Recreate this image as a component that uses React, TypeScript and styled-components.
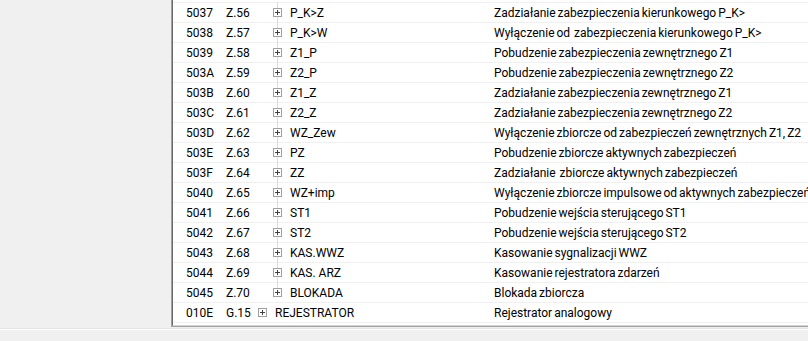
import React from 'react';
import styled, { createGlobalStyle } from 'styled-components';

type Row = {
  code: string;
  ref: string;
  name: string;
  desc: string;
  level: number;
  last?: boolean;
};

const rows: Row[] = [
  { code: '5037', ref: 'Z.56', name: 'P_K>Z', desc: 'Zadziałanie zabezpieczenia kierunkowego P_K>', level: 2 },
  { code: '5038', ref: 'Z.57', name: 'P_K>W', desc: 'Wyłączenie od  zabezpieczenia kierunkowego P_K>', level: 2 },
  { code: '5039', ref: 'Z.58', name: 'Z1_P', desc: 'Pobudzenie zabezpieczenia zewnętrznego Z1', level: 2 },
  { code: '503A', ref: 'Z.59', name: 'Z2_P', desc: 'Pobudzenie zabezpieczenia zewnętrznego Z2', level: 2 },
  { code: '503B', ref: 'Z.60', name: 'Z1_Z', desc: 'Zadziałanie zabezpieczenia zewnętrznego Z1', level: 2 },
  { code: '503C', ref: 'Z.61', name: 'Z2_Z', desc: 'Zadziałanie zabezpieczenia zewnętrznego Z2', level: 2 },
  { code: '503D', ref: 'Z.62', name: 'WZ_Zew', desc: 'Wyłączenie zbiorcze od zabezpieczeń zewnętrznych Z1, Z2', level: 2 },
  { code: '503E', ref: 'Z.63', name: 'PZ', desc: 'Pobudzenie zbiorcze aktywnych zabezpieczeń', level: 2 },
  { code: '503F', ref: 'Z.64', name: 'ZZ', desc: 'Zadziałanie  zbiorcze aktywnych zabezpieczeń', level: 2 },
  { code: '5040', ref: 'Z.65', name: 'WZ+imp', desc: 'Wyłączenie zbiorcze impulsowe od aktywnych zabezpieczeń', level: 2 },
  { code: '5041', ref: 'Z.66', name: 'ST1', desc: 'Pobudzenie wejścia sterującego ST1', level: 2 },
  { code: '5042', ref: 'Z.67', name: 'ST2', desc: 'Pobudzenie wejścia sterującego ST2', level: 2 },
  { code: '5043', ref: 'Z.68', name: 'KAS.WWZ', desc: 'Kasowanie sygnalizacji WWZ', level: 2 },
  { code: '5044', ref: 'Z.69', name: 'KAS. ARZ', desc: 'Kasowanie rejestratora zdarzeń', level: 2 },
  { code: '5045', ref: 'Z.70', name: 'BLOKADA', desc: 'Blokada zbiorcza', level: 2, last: true },
  { code: '010E', ref: 'G.15', name: 'REJESTRATOR', desc: 'Rejestrator analogowy', level: 1 },
];

export default function App() {
  return (
    <>
      <GlobalStyle />
      <StyledWindow>
        <StyledMain>
          <StyledSidePane />
          <StyledListPane>
            <StyledList>
              {rows.map((row) => (
                <StyledRow key={row.code}>
                  <StyledCode>{row.code}</StyledCode>
                  <StyledRef>{row.ref}</StyledRef>
                  <StyledTreeCell level={row.level}>
                    {row.level > 1 && <StyledTreeLine last={row.last} />}
                    <StyledExpander>
                      <svg width="9" height="9" viewBox="0 0 9 9">
                        <rect x="0.5" y="0.5" width="8" height="8" fill="#fff" stroke="#a0a0a0" />
                        <path d="M2 4.5h5M4.5 2v5" stroke="#404040" strokeWidth="1" />
                      </svg>
                    </StyledExpander>
                    <span>{row.name}</span>
                  </StyledTreeCell>
                  <StyledDesc>{row.desc}</StyledDesc>
                </StyledRow>
              ))}
            </StyledList>
          </StyledListPane>
        </StyledMain>
        <StyledStatus />
      </StyledWindow>
    </>
  );
}

const GlobalStyle = createGlobalStyle`
  html, body {
    margin: 0;
    padding: 0;
    background: #f0f0f0;
  }
`;

const StyledWindow = styled.div`
  width: 808px;
  height: 341px;
  display: flex;
  flex-direction: column;
  background: #f0f0f0;
  overflow: hidden;
  font-family: Roboto, 'Liberation Sans', Arial, sans-serif;
  font-size: 12px;
  color: #000;
`;

const StyledMain = styled.div`
  display: flex;
  height: 327px;
  flex-shrink: 0;
`;

const StyledSidePane = styled.div`
  width: 171px;
  flex-shrink: 0;
`;

const StyledListPane = styled.div`
  flex: 1;
  min-width: 0;
  border-left: 1px solid #a0a0a0;
  border-bottom: 1px solid #a0a0a0;
  display: flex;
`;

const StyledList = styled.div`
  flex: 1;
  min-width: 0;
  background: #fff;
  border-left: 1px solid #696969;
  border-bottom: 1px solid #d4d4d4;
  padding-top: 2px;
  overflow: hidden;
`;

const StyledRow = styled.div`
  display: flex;
  align-items: center;
  height: 19px;
  border-top: 1px solid #f0f0f0;
  white-space: pre;

  &:last-child {
    border-bottom: 1px solid #f0f0f0;
  }
`;

const StyledCode = styled.span`
  width: 40px;
  padding-left: 13px;
  flex-shrink: 0;
`;

const StyledRef = styled.span`
  width: 32px;
  flex-shrink: 0;
`;

const StyledTreeCell = styled.div<{ level: number }>`
  position: relative;
  display: flex;
  align-items: center;
  gap: 8px;
  width: 236px;
  height: 100%;
  flex-shrink: 0;
  padding-left: ${({ level }) => (level - 1) * 15}px;
  box-sizing: border-box;
`;

const StyledTreeLine = styled.span<{ last?: boolean }>`
  position: absolute;
  left: 19px;
  top: -1px;
  width: 1px;
  height: ${({ last }) => (last ? '6px' : '20px')};
  background: #dcdcdc;
`;

const StyledExpander = styled.span`
  position: relative;
  display: flex;
  width: 9px;
  height: 9px;
  flex-shrink: 0;
`;

const StyledDesc = styled.span`
  flex-shrink: 0;
  word-spacing: -1px;
`;

const StyledStatus = styled.div`
  flex: 1;
  border-top: 1px solid #e3e3e3;
  box-shadow: inset 0 1px 0 #fff;
  margin-top: 1px;
`;
